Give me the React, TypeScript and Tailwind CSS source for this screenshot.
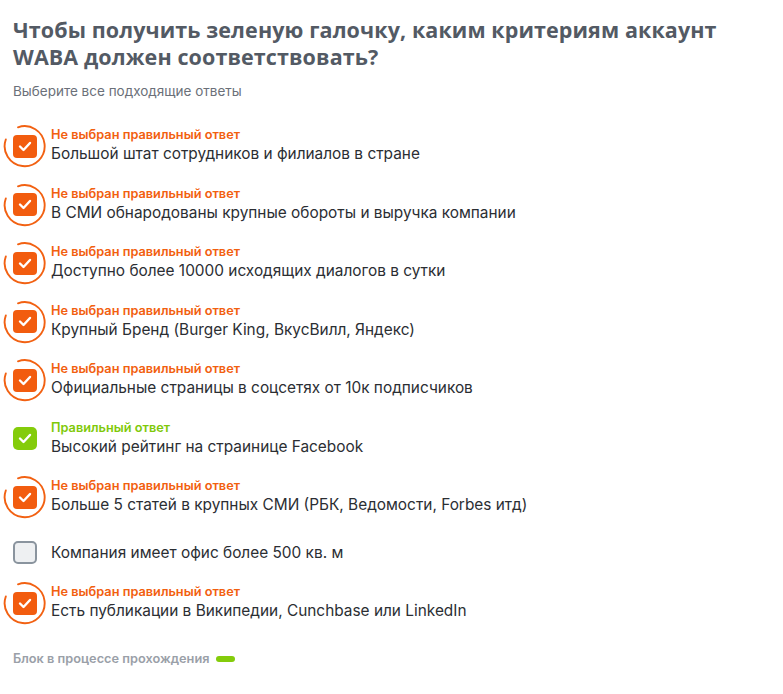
import React from "react";

type Status = "missed" | "correct" | "none";

interface Answer {
  text: string;
  status: Status;
}

const answers: Answer[] = [
  { text: "Большой штат сотрудников и филиалов в стране", status: "missed" },
  { text: "В СМИ обнародованы крупные обороты и выручка компании", status: "missed" },
  { text: "Доступно более 10000 исходящих диалогов в сутки", status: "missed" },
  { text: "Крупный Бренд (Burger King, ВкусВилл, Яндекс)", status: "missed" },
  { text: "Официальные страницы в соцсетях от 10к подписчиков", status: "missed" },
  { text: "Высокий рейтинг на страинице Facebook", status: "correct" },
  { text: "Больше 5 статей в крупных СМИ (РБК, Ведомости, Forbes итд)", status: "missed" },
  { text: "Компания имеет офис более 500 кв. м", status: "none" },
  { text: "Есть публикации в Википедии, Cunchbase или LinkedIn", status: "missed" },
];

function Check() {
  return (
    <svg width="14" height="11" viewBox="0 0 14 11" fill="none">
      <path d="M2 5.5l3.5 3.5L12 2" stroke="white" strokeWidth="2.4" strokeLinecap="round" strokeLinejoin="round" />
    </svg>
  );
}

function Box({ status }: { status: Status }) {
  if (status === "none") {
    return <div className="w-[24px] h-[23px] rounded-[5px] border-2 border-[#8a949e] bg-[#eef0f2]" />;
  }
  if (status === "correct") {
    return (
      <div className="w-[24px] h-[23px] rounded-[5px] bg-[#84cc0b] flex items-center justify-center">
        <Check />
      </div>
    );
  }
  return (
    <div className="relative w-[24px] h-[23px]">
      {/* open ring round the box */}
      <svg className="absolute left-[-10px] top-[-10.5px]" width="44" height="44" viewBox="0 0 44 44" fill="none">
        <path d="M2.8 15.5 A20 20 0 1 0 15 3.3" stroke="#f26112" strokeWidth="1.9" strokeLinecap="round" />
      </svg>
      <div className="w-[24px] h-[23px] rounded-[4px] bg-[#f25c0f] flex items-center justify-center">
        <Check />
      </div>
    </div>
  );
}

export default function App() {
  return (
    <div className="w-[783px] min-h-[694px] bg-white px-[13px] pt-[16px] font-['Inter','Noto_Sans',sans-serif]">
      <h1 className="text-[21.5px] leading-[27px] font-bold text-[#535a64] tracking-[0.1px] font-['Open_Sans',sans-serif]">
        Чтобы получить зеленую галочку, каким критериям аккаунт WABA должен соответствовать?
      </h1>
      <p className="mt-[11px] text-[13.5px] text-[#6b7079]">Выберите все подходящие ответы</p>

      <div className="mt-[26px] flex flex-col gap-[20.5px]">
        {answers.map((a, i) => (
          <div key={i} className={`flex items-center min-h-[28px] ${a.status === "none" ? "mt-[2px] -mb-[3px]" : ""}`}>
            <div className="w-[38px] shrink-0 flex items-center">
              <Box status={a.status} />
            </div>
            <div className="flex flex-col">
              {a.status === "missed" && (
                <span className="text-[12.75px] leading-[16px] font-semibold text-[#f2600f]">Не выбран правильный ответ</span>
              )}
              {a.status === "correct" && (
                <span className="text-[12.75px] leading-[16px] font-semibold text-[#7fc90a]">Правильный ответ</span>
              )}
              <span className="text-[15.4px] leading-[22px] text-[#2b2e33]">{a.text}</span>
            </div>
          </div>
        ))}
      </div>

      <div className="mt-[27px] flex items-center gap-[7px]">
        <span className="text-[12.75px] font-semibold text-[#9aa0a8]">Блок в процессе прохождения</span>
        <span className="w-[19px] h-[6px] rounded-full bg-[#84cc0b]" />
      </div>
    </div>
  );
}
